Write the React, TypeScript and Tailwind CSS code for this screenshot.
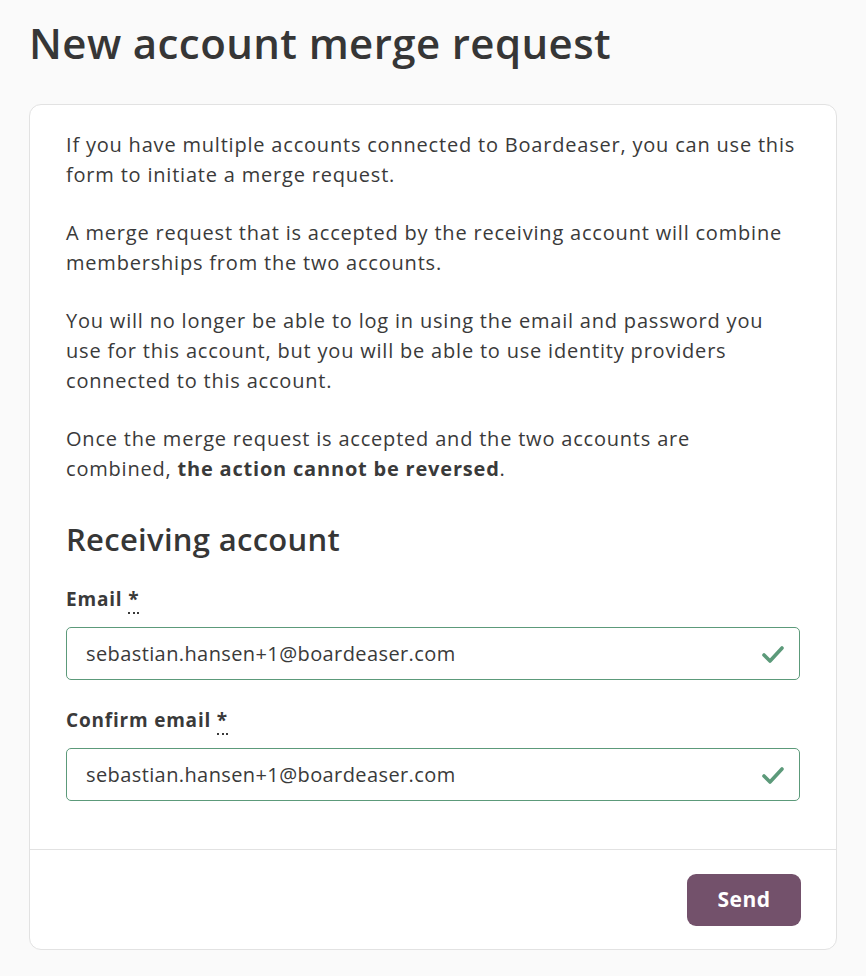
import React from "react";

function Check() {
  return (
    <svg width="24" height="20" viewBox="0 0 24 20" fill="none">
      <path d="M3 11 L9 17 L21 4" stroke="#5c9a7a" strokeWidth="3.6" strokeLinecap="round" strokeLinejoin="round" />
    </svg>
  );
}

function Field({ label, value }: { label: string; value: string }) {
  return (
    <div className="flex flex-col">
      <label className="text-[19px] font-bold leading-[28px] tracking-[0.8px] text-[#3a3a3a]">
        {label}{" "}
        <abbr className="no-underline border-b-2 border-dotted border-[#3a3a3a] leading-none" title="required">*</abbr>
      </label>
      <div className="mt-[14px] flex h-[53px] items-center rounded-[5px] border border-[#5c9a7a] bg-white pl-[19px] pr-[14px]">
        <span className="flex-1 text-[20px] tracking-[0.4px] text-[#3a3a3a]">{value}</span>
        <Check />
      </div>
    </div>
  );
}

export default function App() {
  return (
    <div className="min-h-[976px] bg-[#fafafa] px-[29px] pt-[17px] pb-[27px]" style={{ fontFamily: "'Open Sans', sans-serif" }}>
      <h1 className="text-[42px] font-semibold leading-[52px] tracking-[0.4px] text-[#363636]">New account merge request</h1>
      <div className="mt-[35px] w-[808px] rounded-[12px] border border-[#e2e2e2] bg-white">
        <div className="px-[36px] pt-[25px] pb-[48px] text-[20px] leading-[30px] tracking-[0.8px] text-[#3a3a3a]">
          <p className="mb-[28px] whitespace-nowrap">If you have multiple accounts connected to Boardeaser, you can use this<br />form to initiate a merge request.</p>
          <p className="mb-[28px] whitespace-nowrap">A merge request that is accepted by the receiving account will combine<br />memberships from the two accounts.</p>
          <p className="mb-[28px] whitespace-nowrap">You will no longer be able to log in using the email and password you<br />use for this account, but you will be able to use identity providers<br />connected to this account.</p>
          <p className="whitespace-nowrap">Once the merge request is accepted and the two accounts are<br />combined, <strong>the action cannot be reversed</strong>.</p>
          <h2 className="mt-[35px] text-[31px] font-semibold leading-[40px] tracking-[0.3px] text-[#363636]">Receiving account</h2>
          <div className="mt-[26px] flex flex-col gap-[26px]">
            <Field label="Email" value="sebastian.hansen+1@boardeaser.com" />
            <Field label="Confirm email" value="sebastian.hansen+1@boardeaser.com" />
          </div>
        </div>
        <div className="flex justify-end border-t border-[#e2e2e2] px-[35px] pt-[24px] pb-[23px]">
          <button className="h-[52px] w-[114px] rounded-[9px] bg-[#73516b] text-[21px] font-bold tracking-[0.5px] text-white">Send</button>
        </div>
      </div>
    </div>
  );
}
